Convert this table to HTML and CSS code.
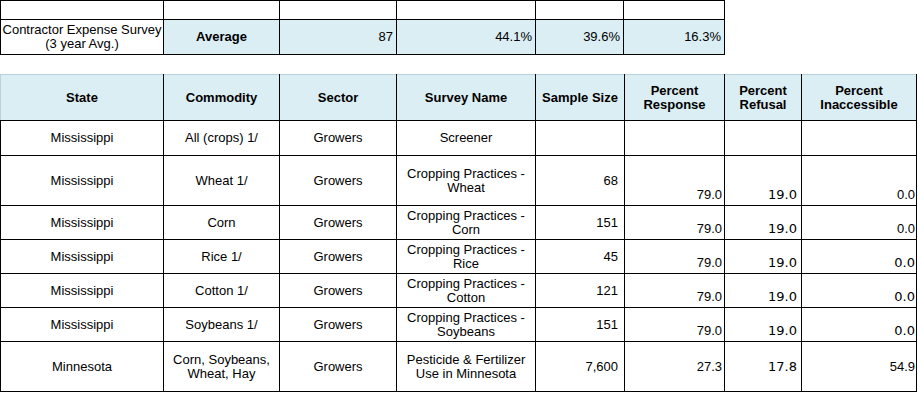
FILE: index.html
```html
<!DOCTYPE html>
<html>
<head>
<meta charset="utf-8">
<link rel="stylesheet" href="styles.css">
</head>
<body>
<table class="avg">
  <colgroup>
    <col class="c1"><col class="c2"><col class="c3"><col class="c4"><col class="c5"><col class="c6">
  </colgroup>
  <tr class="r-empty"><td></td><td></td><td></td><td></td><td></td><td></td></tr>
  <tr class="r-avg">
    <td class="ctr">Contractor Expense Survey<br>(3 year Avg.)</td>
    <td class="blue ctr bold">Average</td>
    <td class="blue num">87</td>
    <td class="blue num">44.1%</td>
    <td class="blue num">39.6%</td>
    <td class="blue num">16.3%</td>
  </tr>
</table>

<table class="data">
  <colgroup>
    <col class="c1"><col class="c2"><col class="c3"><col class="c4"><col class="c5"><col class="c6"><col class="c7"><col class="c8">
  </colgroup>
  <tr class="head">
    <th>State</th><th>Commodity</th><th>Sector</th><th>Survey Name</th><th>Sample Size</th><th>Percent<br>Response</th><th>Percent<br>Refusal</th><th>Percent<br>Inaccessible</th>
  </tr>
  <tr class="h35">
    <td>Mississippi</td><td>All (crops) 1/</td><td>Growers</td><td>Screener</td><td></td><td></td><td></td><td></td>
  </tr>
  <tr class="h50">
    <td>Mississippi</td><td>Wheat 1/</td><td>Growers</td><td>Cropping Practices -<br>Wheat</td><td class="num ss">68</td><td class="num bot pr">79.0</td><td class="num bot rf dv">19.0</td><td class="num bot ia">0.0</td>
  </tr>
  <tr class="h34">
    <td>Mississippi</td><td>Corn</td><td>Growers</td><td>Cropping Practices -<br>Corn</td><td class="num ss">151</td><td class="num bot pr">79.0</td><td class="num bot rf dv">19.0</td><td class="num bot ia">0.0</td>
  </tr>
  <tr class="h34">
    <td>Mississippi</td><td>Rice 1/</td><td>Growers</td><td>Cropping Practices -<br>Rice</td><td class="num ss">45</td><td class="num bot pr">79.0</td><td class="num bot rf dv">19.0</td><td class="num bot ia dv">0.0</td>
  </tr>
  <tr class="h34">
    <td>Mississippi</td><td>Cotton 1/</td><td>Growers</td><td>Cropping Practices -<br>Cotton</td><td class="num ss">121</td><td class="num bot pr">79.0</td><td class="num bot rf dv">19.0</td><td class="num bot ia dv">0.0</td>
  </tr>
  <tr class="h34">
    <td>Mississippi</td><td>Soybeans 1/</td><td>Growers</td><td>Cropping Practices -<br>Soybeans</td><td class="num ss">151</td><td class="num bot pr">79.0</td><td class="num bot rf dv">19.0</td><td class="num bot ia dv">0.0</td>
  </tr>
  <tr class="h50">
    <td>Minnesota</td><td>Corn, Soybeans,<br>Wheat, Hay</td><td>Growers</td><td>Pesticide &amp; Fertilizer<br>Use in Minnesota</td><td class="num ss">7,600</td><td class="num pr">27.3</td><td class="num rf dv">17.8</td><td class="num ia">54.9</td>
  </tr>
</table>
</body>
</html>
```

FILE: styles.css
```css
html, body {
  margin: 0;
  padding: 0;
  background: #ffffff;
}

body {
  font-family: "Liberation Sans", Arial, sans-serif;
  font-size: 13px;
  line-height: 14px;
  color: #000;
}

table {
  border-collapse: collapse;
  table-layout: fixed;
}

td, th {
  border: 1px solid #000;
  padding: 0;
  text-align: center;
  vertical-align: middle;
  overflow: hidden;
  white-space: nowrap;
}

/* top table */
.avg {
  width: 724px;
}
.avg .c1 { width: 163px; }
.avg .c2 { width: 116px; }
.avg .c3 { width: 117px; }
.avg .c4 { width: 139px; }
.avg .c5 { width: 88px; }
.avg .c6 { width: 101px; }

.r-empty { height: 19px; }
.r-avg { height: 35px; }

.blue { background: #daeef3; }
.bold { font-weight: bold; }
.ctr { text-align: center; }

.avg .num {
  text-align: right;
  padding-right: 3px;
}

/* bottom table */
.data {
  width: 916px;
  margin-top: 19px;
}
.data .c1 { width: 163px; }
.data .c2 { width: 116px; }
.data .c3 { width: 117px; }
.data .c4 { width: 139px; }
.data .c5 { width: 89px; }
.data .c6 { width: 100px; }
.data .c7 { width: 77px; }
.data .c8 { width: 115px; }

.head { height: 46px; }
.head th {
  background: #daeef3;
  font-weight: bold;
  border-top-color: #b8d3dc;
}
.head th:first-child {
  border-left-color: #b8d3dc;
}

.h35 { height: 35px; }
.h50 { height: 50px; }
.h34 { height: 34px; }

.data .num { text-align: right; }
.data .ss { padding-right: 6px; }
.data .pr { padding-right: 2px; }
.data .rf { padding-right: 4px; }
.data .ia { padding-right: 1px; }

.bot {
  vertical-align: bottom;
  padding-bottom: 3px;
}

.dv {
  font-family: "DejaVu Sans", sans-serif;
}
```
